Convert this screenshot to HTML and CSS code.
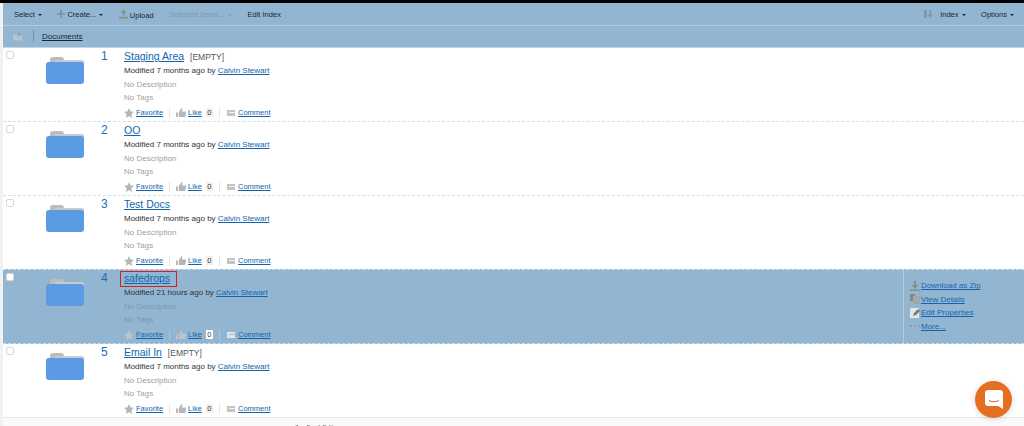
FILE: index.html
```html
<!DOCTYPE html>
<html lang="en">
<head>
  <meta charset="UTF-8">
  <title>Documents</title>
  <link rel="stylesheet" href="styles.css">
</head>
<body>
  <div class="page">
    <!-- Toolbar -->
    <div class="toolbar">
      <span class="tool">Select <i class="caret"></i></span>
      <span class="tool"><svg class="tool-icon" width="8" height="8" viewBox="0 0 10 10"><path d="M4 0h2v4h4v2H6v4H4V6H0V4h4z" fill="#7f8f9c"/></svg>Create... <i class="caret"></i></span>
      <span class="tool"><svg class="tool-icon" width="9" height="10" viewBox="0 0 11 11"><path d="M5.500 0L9 4H6.500v4h-2V4H2zM0 9h11v2H0z" fill="#8a8f86"/></svg>Upload</span>
      <span class="tool tool-off">Selected Items... <i class="caret"></i></span>
      <span class="tool">Edit Index</span>
      <span class="toolbar-right">
        <svg class="sort-icon" width="9" height="8" viewBox="0 0 10 9"><path d="M0 0h3v9H0z" fill="#8393a0"/><path d="M6 0h2v5h2L7 9 4 5h2z" fill="#8393a0"/></svg>
        <span class="tool">Index <i class="caret"></i></span>
        <span class="tool tool-last">Options <i class="caret"></i></span>
      </span>
    </div>

    <!-- Path -->
    <div class="pathbar">
      <svg width="9" height="9" viewBox="0 0 10 9"><path d="M0 2h4l1 1h5v6H0z" fill="#b3c3cf"/><path d="M7 0l2 2H8v2H6V2H5z" fill="#8fa0ac"/></svg>
      <span class="path-sep"></span>
      <span class="path-link">Documents</span>
    </div>

    <!-- Rows -->
    <div class="row">
      <span class="check"></span>
      <svg class="folder" viewBox="0 0 38 27"><path d="M4 3q0-3 3-3h8q3 0 3 3v3H4z" fill="#bdbdbd"/><path d="M9 3h27q2 0 2 2v3H9z" fill="#c9c9c9"/><path d="M0 8q0-3 3-3h32q3 0 3 3v16q0 3-3 3H3q-3 0-3-3z" fill="#5a9be4"/></svg>
      <span class="num">1</span>
      <div class="info">
        <div class="title"><a href="#">Staging Area</a> <span class="empty">[EMPTY]</span></div>
        <div class="meta">Modified 7 months ago by <a href="#">Calvin Stewart</a></div>
        <div class="none">No Description</div>
        <div class="none">No Tags</div>
        <div class="actions">
          <svg width="10" height="10" viewBox="0 0 10 10"><path class="ico" d="M5 0l1.500 3.400 3.500.4-2.600 2.400.7 3.800L5 8.100 1.900 10l.7-3.800L0 3.800l3.500-.4z"/></svg>
          <a href="#">Favorite</a><span class="act-sep"></span>
          <svg width="10" height="9" viewBox="0 0 11 10"><path class="ico" d="M0 5h2v5H0zM3 5l3-5 1 1-.5 3H11v2l-1 4H3z"/></svg>
          <a href="#">Like</a><span class="count">0</span><span class="act-sep"></span>
          <svg class="ico-mail" width="8" height="6" viewBox="0 0 8 6"><path class="ico-pale" d="M0 0h8v6H0z"/><path d="M2 2h6v1H2z" fill="#f0f0f0"/></svg>
          <a href="#">Comment</a>
        </div>
      </div>
    </div>

    <div class="row">
      <span class="check"></span>
      <svg class="folder" viewBox="0 0 38 27"><path d="M4 3q0-3 3-3h8q3 0 3 3v3H4z" fill="#bdbdbd"/><path d="M9 3h27q2 0 2 2v3H9z" fill="#c9c9c9"/><path d="M0 8q0-3 3-3h32q3 0 3 3v16q0 3-3 3H3q-3 0-3-3z" fill="#5a9be4"/></svg>
      <span class="num">2</span>
      <div class="info">
        <div class="title"><a href="#">OO</a></div>
        <div class="meta">Modified 7 months ago by <a href="#">Calvin Stewart</a></div>
        <div class="none">No Description</div>
        <div class="none">No Tags</div>
        <div class="actions">
          <svg width="10" height="10" viewBox="0 0 10 10"><path class="ico" d="M5 0l1.500 3.400 3.500.4-2.600 2.400.7 3.800L5 8.100 1.900 10l.7-3.800L0 3.800l3.500-.4z"/></svg>
          <a href="#">Favorite</a><span class="act-sep"></span>
          <svg width="10" height="9" viewBox="0 0 11 10"><path class="ico" d="M0 5h2v5H0zM3 5l3-5 1 1-.5 3H11v2l-1 4H3z"/></svg>
          <a href="#">Like</a><span class="count">0</span><span class="act-sep"></span>
          <svg class="ico-mail" width="8" height="6" viewBox="0 0 8 6"><path class="ico-pale" d="M0 0h8v6H0z"/><path d="M2 2h6v1H2z" fill="#f0f0f0"/></svg>
          <a href="#">Comment</a>
        </div>
      </div>
    </div>

    <div class="row">
      <span class="check"></span>
      <svg class="folder" viewBox="0 0 38 27"><path d="M4 3q0-3 3-3h8q3 0 3 3v3H4z" fill="#bdbdbd"/><path d="M9 3h27q2 0 2 2v3H9z" fill="#c9c9c9"/><path d="M0 8q0-3 3-3h32q3 0 3 3v16q0 3-3 3H3q-3 0-3-3z" fill="#5a9be4"/></svg>
      <span class="num">3</span>
      <div class="info">
        <div class="title"><a href="#">Test Docs</a></div>
        <div class="meta">Modified 7 months ago by <a href="#">Calvin Stewart</a></div>
        <div class="none">No Description</div>
        <div class="none">No Tags</div>
        <div class="actions">
          <svg width="10" height="10" viewBox="0 0 10 10"><path class="ico" d="M5 0l1.500 3.400 3.500.4-2.600 2.400.7 3.800L5 8.100 1.900 10l.7-3.800L0 3.800l3.500-.4z"/></svg>
          <a href="#">Favorite</a><span class="act-sep"></span>
          <svg width="10" height="9" viewBox="0 0 11 10"><path class="ico" d="M0 5h2v5H0zM3 5l3-5 1 1-.5 3H11v2l-1 4H3z"/></svg>
          <a href="#">Like</a><span class="count">0</span><span class="act-sep"></span>
          <svg class="ico-mail" width="8" height="6" viewBox="0 0 8 6"><path class="ico-pale" d="M0 0h8v6H0z"/><path d="M2 2h6v1H2z" fill="#f0f0f0"/></svg>
          <a href="#">Comment</a>
        </div>
      </div>
    </div>

    <div class="row row-active">
      <span class="check"></span>
      <svg class="folder" viewBox="0 0 38 27"><path d="M4 3q0-3 3-3h8q3 0 3 3v3H4z" fill="#bdbdbd"/><path d="M9 3h27q2 0 2 2v3H9z" fill="#c9c9c9"/><path d="M0 8q0-3 3-3h32q3 0 3 3v16q0 3-3 3H3q-3 0-3-3z" fill="#5a9be4"/></svg>
      <span class="num">4</span>
      <div class="info">
        <div class="title"><a class="marked" href="#">safedrops</a></div>
        <div class="meta">Modified 21 hours ago by <a href="#">Calvin Stewart</a></div>
        <div class="none">No Description</div>
        <div class="none">No Tags</div>
        <div class="actions">
          <svg width="10" height="10" viewBox="0 0 10 10"><path class="ico" d="M5 0l1.500 3.400 3.500.4-2.600 2.400.7 3.800L5 8.100 1.900 10l.7-3.800L0 3.800l3.500-.4z"/></svg>
          <a href="#">Favorite</a><span class="act-sep"></span>
          <svg width="10" height="9" viewBox="0 0 11 10"><path class="ico" d="M0 5h2v5H0zM3 5l3-5 1 1-.5 3H11v2l-1 4H3z"/></svg>
          <a href="#">Like</a><span class="count">0</span><span class="act-sep"></span>
          <svg class="ico-mail" width="8" height="6" viewBox="0 0 8 6"><path class="ico-pale" d="M0 0h8v6H0z"/><path d="M2 2h6v1H2z" fill="#a9c3d6"/></svg>
          <a href="#">Comment</a>
        </div>
      </div>
      <div class="side">
        <a href="#"><svg width="10" height="10" viewBox="0 0 10 10"><path d="M4 0h2v4h2.500L5 8 1.500 4H4zM0 8.500h10V10H0z" fill="#8a8f86"/></svg>Download as Zip</a>
        <a href="#"><svg width="10" height="10" viewBox="0 0 10 10"><path d="M0 0h5v7H0z" fill="#85888a"/><path d="M3 2h7v8H3z" fill="#a4a7a9"/></svg>View Details</a>
        <a href="#"><svg width="10" height="10" viewBox="0 0 10 10"><path d="M0 0h9v10H0z" fill="#e6e6e0"/><path d="M3 8l1-3 4-4 2 2-4 4z" fill="#77797a"/></svg>Edit Properties</a>
        <a href="#"><svg width="10" height="10" viewBox="0 0 10 10"><path d="M0 4h2v2H0zM4 4h2v2H4zM8 4h2v2H8z" fill="#8da0ae"/></svg>More...</a>
      </div>
    </div>

    <div class="row row-last">
      <span class="check"></span>
      <svg class="folder" viewBox="0 0 38 27"><path d="M4 3q0-3 3-3h8q3 0 3 3v3H4z" fill="#bdbdbd"/><path d="M9 3h27q2 0 2 2v3H9z" fill="#c9c9c9"/><path d="M0 8q0-3 3-3h32q3 0 3 3v16q0 3-3 3H3q-3 0-3-3z" fill="#5a9be4"/></svg>
      <span class="num">5</span>
      <div class="info">
        <div class="title"><a href="#">Email In</a> <span class="empty">[EMPTY]</span></div>
        <div class="meta">Modified 7 months ago by <a href="#">Calvin Stewart</a></div>
        <div class="none">No Description</div>
        <div class="none">No Tags</div>
        <div class="actions">
          <svg width="10" height="10" viewBox="0 0 10 10"><path class="ico" d="M5 0l1.500 3.400 3.500.4-2.600 2.400.7 3.800L5 8.100 1.900 10l.7-3.800L0 3.800l3.500-.4z"/></svg>
          <a href="#">Favorite</a><span class="act-sep"></span>
          <svg width="10" height="9" viewBox="0 0 11 10"><path class="ico" d="M0 5h2v5H0zM3 5l3-5 1 1-.5 3H11v2l-1 4H3z"/></svg>
          <a href="#">Like</a><span class="count">0</span><span class="act-sep"></span>
          <svg class="ico-mail" width="8" height="6" viewBox="0 0 8 6"><path class="ico-pale" d="M0 0h8v6H0z"/><path d="M2 2h6v1H2z" fill="#f0f0f0"/></svg>
          <a href="#">Comment</a>
        </div>
      </div>
    </div>

    <div class="foot">1 - 5 of 5 Items</div>
  </div>

  <!-- Chat launcher -->
  <div class="chat">
    <svg width="18" height="19" viewBox="0 0 18 19"><path d="M3 0h12q3 0 3 3v16l-5-3H3q-3 0-3-3V3q0-3 3-3z" fill="#fff"/><path d="M4 10.500q5 2.500 10 0" fill="none" stroke="#e56f21" stroke-width="1.200"/></svg>
  </div>
</body>
</html>
```

FILE: styles.css
```css
/* General */
html, body {
  height: 100%;
}

body {
  margin: 0;
  overflow: hidden;
  box-sizing: border-box;
  font-family: "Liberation Sans", Arial, sans-serif;
  font-size: 8px;
  color: #333;
  background-color: #f1f1f1;
  border-top: 3px solid #000;
}

a {
  color: #1265ad;
}

.page {
  height: 100%;
  margin-left: 3px;
  background-color: #fff;
}

/* Toolbar */
.toolbar {
  display: flex;
  align-items: center;
  height: 22px;
  padding-left: 11px;
  background-color: #92b6d2;
  border-bottom: 1px solid #b3cde0;
  font-size: 7.500px;
  color: #1b2530;
}

.tool {
  margin-right: 15.500px;
  white-space: nowrap;
}

.tool-last {
  margin-right: 10px;
}

.tool-icon {
  margin-right: 2px;
  vertical-align: -1px;
}

.sort-icon {
  margin-right: 7px;
}

.tool-off {
  color: #7d99ae;
}

.toolbar-right {
  display: flex;
  align-items: center;
  margin-left: auto;
}

.caret {
  display: inline-block;
  margin-left: 1px;
  border: 2.500px solid transparent;
  border-top-color: #1b2530;
  border-bottom: 0;
  vertical-align: 1px;
}

.tool-off .caret {
  border-top-color: #7d99ae;
}

/* Path */
.pathbar {
  display: flex;
  align-items: center;
  height: 22px;
  padding-bottom: 1px;
  padding-left: 10px;
  box-sizing: border-box;
  background-color: #92b6d2;
  border-bottom: 1px solid #c4d6e4;
  color: #1b2530;
}

.path-sep {
  width: 1px;
  height: 12px;
  margin: 0 8px 0 11px;
  background-color: #6f8fa6;
}

.path-link {
  text-decoration: underline;
}

/* Rows */
.row {
  display: flex;
  height: 73px;
  border-bottom: 1px dashed #ddd;
}

.row-active {
  margin-top: -1px;
  background-color: #92b6d2;
  border-top: 1px dashed #cfdde8;
  border-bottom-color: #cfdde8;
}

.row-last {
  border-bottom: 1px solid #e8e8e8;
}

.check {
  flex: none;
  width: 6px;
  height: 6px;
  margin: 3px 0 0 3px;
  background-color: #fff;
  border: 1px solid #d8d8d8;
  border-radius: 2px;
}

.folder {
  flex: none;
  width: 38px;
  height: 27px;
  margin: 9px 0 0 32px;
}

.num {
  flex: none;
  width: 23px;
  margin: 1px 0 0 17px;
  color: #1e6cb4;
  font-size: 12px;
  line-height: 14px;
}

.info {
  flex: 1;
  padding-top: 1px;
}

.title {
  height: 15px;
  font-size: 10.500px;
  line-height: 14px;
}

.empty {
  margin-left: 3px;
  color: #555;
  font-size: 8.500px;
}

.meta,
.none {
  height: 13.500px;
  line-height: 14px;
}

.none {
  color: #a0a0a0;
}

.row-active .none {
  color: #7f98ab;
}

.marked {
  padding: 0 6px 2px 3px;
  margin-left: -3px;
  outline: 1.500px solid #d0202a;
}

.actions {
  display: flex;
  align-items: center;
  height: 14px;
  margin-top: 1px;
  font-size: 7.500px;
}

.actions svg {
  margin-right: 2px;
}

.actions .ico-mail {
  margin-right: 3px;
  margin-left: 1px;
}

.ico {
  fill: #b5b5b5;
}

.ico-pale {
  fill: #c4c4c4;
}

.row-active .ico {
  fill: #bcc5ca;
}

.row-active .ico-pale {
  fill: #dde3e6;
}

.act-sep {
  width: 1px;
  height: 10px;
  margin: 0 6px;
  background-color: #e6e6e6;
}

.count {
  margin-left: 4px;
  padding: 0 1.500px;
  background-color: #f0f0f0;
}

.row-active .act-sep {
  background-color: #a9c5da;
}

.row-active .count {
  background-color: #fff;
}

/* Side menu on the hovered row */
.side {
  flex: none;
  display: flex;
  flex-direction: column;
  width: 121px;
  padding: 9px 0 0 6px;
  box-sizing: border-box;
  border-left: 1px solid #b6cfd0;
}

.side a {
  display: flex;
  align-items: center;
  height: 13.500px;
}

.side svg {
  margin-right: 1px;
}

.foot {
  padding: 5px 0 0 292px;
  color: #666;
  background-color: #fafafa;
}

/* Chat launcher */
.chat {
  position: fixed;
  right: 12px;
  bottom: 8px;
  display: flex;
  align-items: center;
  justify-content: center;
  width: 37px;
  height: 37px;
  border-radius: 50%;
  background-color: #e56f21;
  box-shadow: 0 1px 6px rgba(0, 0, 0, 0.15);
}
```
